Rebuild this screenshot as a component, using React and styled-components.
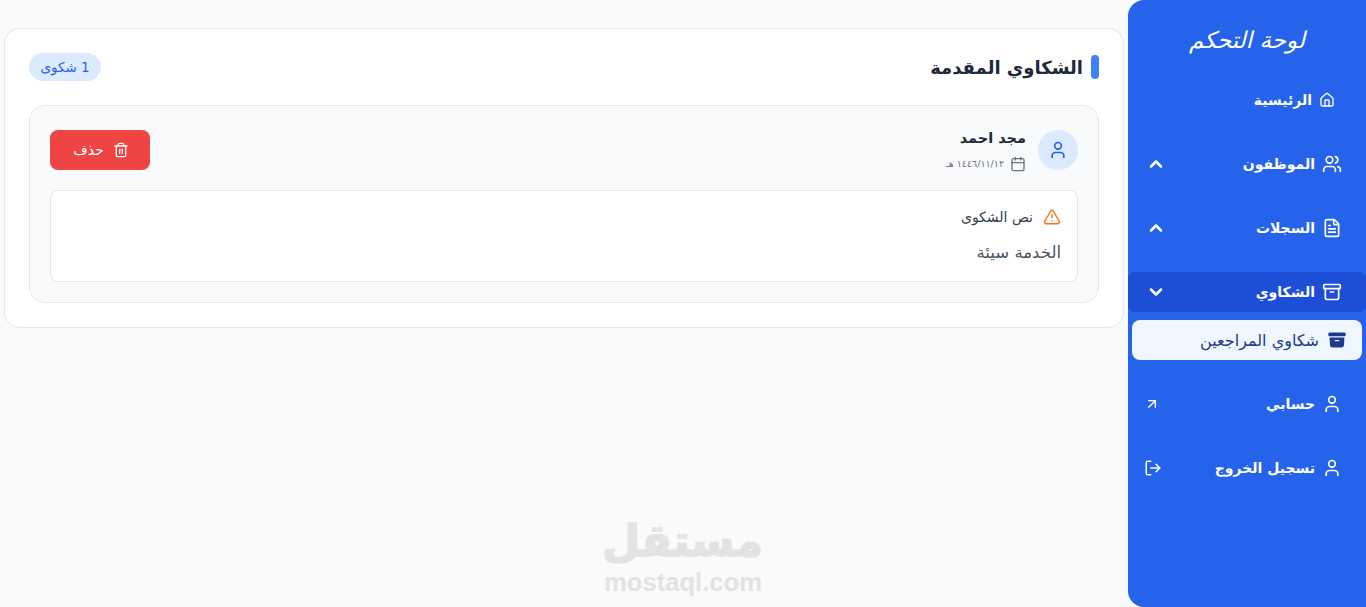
import React from "react";
import styled, { createGlobalStyle } from "styled-components";
import { House, Users, FileText, Archive, ChevronUp, ChevronDown, ArrowUpRight, LogOut, User, Calendar, TriangleAlert, Trash2 } from "lucide-react";
import { HiArchiveBox } from "react-icons/hi2";

const FONT = `"DejaVu Sans", sans-serif`;

const Global = createGlobalStyle`
  html, body { margin: 0; padding: 0; height: 100%; }
  body { background: #f9fafb; font-family: ${FONT}; overflow: hidden; }
  * { box-sizing: border-box; }
`;

const Page = styled.div`
  direction: rtl;
  display: flex;
  height: 607px;
  position: relative;
`;

const Sidebar = styled.aside`
  width: 238px;
  flex: none;
  background: #2563eb;
  border-radius: 16px 0 0 16px;
  color: #fff;
  padding-top: 24px;
  display: flex;
  flex-direction: column;
`;

const Brand = styled.h1`
  margin: 0 0 24px;
  height: 32px;
  line-height: 32px;
  text-align: center;
  font-size: 23px;
  font-weight: 400;
  font-style: italic;
`;

const Nav = styled.nav`
  display: flex;
  flex-direction: column;
  gap: 24px;
`;

const Group = styled.div`
  display: flex;
  flex-direction: column;
  gap: 8px;
`;

const Row = styled.div`
  height: 40px;
  display: flex;
  align-items: center;
  padding: 0 24px 0 16px;
  gap: 7px;
  border-radius: 6px;
  font-size: 14px;
  font-weight: 600;
  background: ${p => (p.$active ? "#1d4ed8" : "transparent")};
`;

const HomeRow = styled(Row)`
  padding-right: 31px;
`;

const Trail = styled.span`
  margin-right: auto;
  display: flex;
  align-items: center;
  justify-content: center;
  width: 24px;
  margin-left: ${p => p.$shift || 0}px;
`;

const SubItem = styled.div`
  height: 40px;
  margin: 0 4px;
  background: #eff6ff;
  border-radius: 8px;
  display: flex;
  align-items: center;
  gap: 8px;
  padding-right: 15px;
  font-size: 16px;
  color: #1e3a8a;
`;

const Main = styled.main`
  flex: 1;
  min-width: 0;
  padding: 28px 4px 0 4px;
`;

const Card = styled.section`
  background: #fff;
  border: 1px solid #e5e7eb;
  border-radius: 16px;
  height: 300px;
  padding: 24px;
`;

const Header = styled.header`
  display: flex;
  align-items: center;
  justify-content: space-between;
  height: 28px;
  margin-bottom: 24px;
`;

const Heading = styled.h2`
  margin: 0;
  display: flex;
  align-items: center;
  gap: 8px;
  font-size: 18px;
  font-weight: 700;
  color: #1f2937;
`;

const Accent = styled.span`
  width: 8px;
  height: 24px;
  border-radius: 4px;
  background: #3b82f6;
`;

const Badge = styled.span`
  height: 28px;
  width: 72px;
  border-radius: 14px;
  background: #dbeafe;
  color: #2563eb;
  font-size: 13.5px;
  display: flex;
  align-items: center;
  justify-content: center;
`;

const Complaint = styled.article`
  background: #f9fafb;
  border: 1px solid #e5e7eb;
  border-radius: 16px;
  height: 198px;
  padding: 24px 20px 20px;
`;

const Top = styled.div`
  display: flex;
  align-items: center;
  justify-content: space-between;
  height: 40px;
  margin-bottom: 20px;
`;

const Person = styled.div`
  display: flex;
  align-items: center;
  gap: 12px;
`;

const Avatar = styled.div`
  width: 40px;
  height: 40px;
  border-radius: 50%;
  background: #dbeafe;
  color: #2563eb;
  display: flex;
  align-items: center;
  justify-content: center;
`;

const Who = styled.div`
  padding-top: 2px;
`;

const Name = styled.div`
  font-size: 14.5px;
  font-weight: 700;
  color: #1f2937;
  line-height: 16px;
  margin-bottom: 10px;
`;

const DateLine = styled.div`
  display: flex;
  align-items: center;
  gap: 6px;
  font-size: 9.5px;
  line-height: 16px;
  color: #6b7280;
`;

const DeleteButton = styled.button`
  width: 100px;
  height: 40px;
  border: 0;
  border-radius: 8px;
  background: #ef4444;
  color: #fff;
  font: 400 14px ${FONT};
  display: flex;
  align-items: center;
  justify-content: center;
  gap: 9px;
  padding: 0 0 0 2px;
`;

const Body = styled.div`
  background: #fff;
  border: 1px solid #e5e7eb;
  border-radius: 8px;
  height: 92px;
  padding: 16px;
`;

const BodyTitle = styled.div`
  display: flex;
  align-items: center;
  gap: 10px;
  height: 20px;
  font-size: 14px;
  color: #374151;
  margin-bottom: 16px;
`;

const BodyText = styled.p`
  margin: 0;
  font-size: 16.5px;
  line-height: 20px;
  color: #4b5563;
`;

const Watermark = styled.div`
  position: absolute;
  left: 603px;
  top: 512px;
  width: 160px;
  text-align: center;
  color: #e3e3e3;
  pointer-events: none;
`;

const MarkArabic = styled.div`
  font: 700 44px/58px "DejaVu Sans", sans-serif;
  -webkit-text-stroke: 1.5px #e3e3e3;
`;

const MarkLatin = styled.div`
  direction: ltr;
  font: 700 25.6px/24px "Liberation Sans", sans-serif;
`;

export default function App() {
  return (
    <>
      <Global />
      <Page>
        <Sidebar>
          <Brand>لوحة التحكم</Brand>
          <Nav>
            <HomeRow><House size={16} /><span>الرئيسية</span></HomeRow>
            <Row><Users size={20} /><span>الموظفون</span><Trail><ChevronUp size={20} strokeWidth={3} /></Trail></Row>
            <Row><FileText size={20} /><span>السجلات</span><Trail><ChevronUp size={20} strokeWidth={3} /></Trail></Row>
            <Group>
              <Row $active><Archive size={20} /><span>الشكاوي</span><Trail><ChevronDown size={20} strokeWidth={3} /></Trail></Row>
              <SubItem><HiArchiveBox size={20} /><span>شكاوي المراجعين</span></SubItem>
            </Group>
            <Row><User size={20} /><span>حسابي</span><Trail $shift={-4}><ArrowUpRight size={16} /></Trail></Row>
            <Row><User size={20} /><span>تسجيل الخروج</span><Trail $shift={-3}><LogOut size={18} /></Trail></Row>
          </Nav>
        </Sidebar>
        <Main>
          <Card>
            <Header>
              <Heading><Accent /><span>الشكاوي المقدمة</span></Heading>
              <Badge>1 شكوى</Badge>
            </Header>
            <Complaint>
              <Top>
                <Person>
                  <Avatar><User size={20} /></Avatar>
                  <Who>
                    <Name>مجد احمد</Name>
                    <DateLine><Calendar size={16} /><span>١٤٤٦/١١/١٢ هـ</span></DateLine>
                  </Who>
                </Person>
                <DeleteButton><Trash2 size={16} /><span>حذف</span></DeleteButton>
              </Top>
              <Body>
                <BodyTitle><TriangleAlert size={18} color="#f97316" /><span>نص الشكوى</span></BodyTitle>
                <BodyText>الخدمة سيئة</BodyText>
              </Body>
            </Complaint>
          </Card>
        </Main>
        <Watermark>
          <MarkArabic>مستقل</MarkArabic>
          <MarkLatin>mostaql.com</MarkLatin>
        </Watermark>
      </Page>
    </>
  );
}
